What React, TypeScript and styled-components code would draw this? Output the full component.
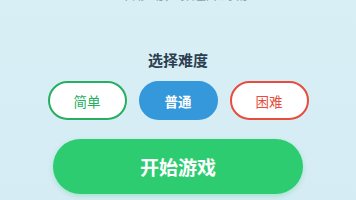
import React, { useState } from "react";
import styled, { createGlobalStyle } from "styled-components";

const Global = createGlobalStyle`
  html, body {
    margin: 0;
    padding: 0;
    background: #d8eef5;
    font-family: "Noto Sans CJK SC", "Noto Sans", sans-serif;
    overflow: hidden;
  }
`;

const Page = styled.div`
  width: 356px;
  height: 200px;
  display: flex;
  flex-direction: column;
  align-items: center;
  background: linear-gradient(180deg, #d9eff6 0%, #d5ecf4 100%);
`;

const Subtitle = styled.p`
  margin: -16px 0 0;
  font-size: 14px;
  line-height: 18px;
  color: #95a5a6;
`;

const Title = styled.h2`
  margin: 48px 0 0;
  font-size: 15px;
  line-height: 20px;
  font-weight: 700;
  color: #2c3e50;
`;

const Row = styled.div`
  display: flex;
  gap: 12px;
  margin-top: 11px;
`;

type Tone = "easy" | "normal" | "hard";

const toneColor: Record<Tone, string> = {
  easy: "#27ae60",
  normal: "#3498db",
  hard: "#e74c3c",
};

const LevelButton = styled.button<{ $tone: Tone; $active: boolean }>`
  width: 79px;
  height: 39px;
  box-sizing: border-box;
  border-radius: 20px;
  border: 2px solid ${(p) => toneColor[p.$tone]};
  background: ${(p) => (p.$active ? toneColor[p.$tone] : "#ffffff")};
  color: ${(p) => (p.$active ? "#ffffff" : toneColor[p.$tone])};
  font-family: inherit;
  font-size: 13.5px;
  font-weight: ${(p) => (p.$active ? 700 : 400)};
  padding: 0;
  cursor: pointer;
`;

const StartButton = styled.button`
  margin-top: 19px;
  width: 250px;
  height: 55px;
  border: none;
  border-radius: 28px;
  background: #2ecc71;
  color: #ffffff;
  font-family: inherit;
  font-size: 19px;
  font-weight: 700;
  box-shadow: 0 2px 5px rgba(46, 204, 113, 0.3);
  cursor: pointer;
`;

const levels: { key: Tone; label: string }[] = [
  { key: "easy", label: "简单" },
  { key: "normal", label: "普通" },
  { key: "hard", label: "困难" },
];

export default function App() {
  const [level, setLevel] = useState<Tone>("normal");
  return (
    <Page>
      <Global />
      <Subtitle>左右移动，躲避障碍物</Subtitle>
      <Title>选择难度</Title>
      <Row>
        {levels.map((l) => (
          <LevelButton
            key={l.key}
            $tone={l.key}
            $active={level === l.key}
            onClick={() => setLevel(l.key)}
          >
            {l.label}
          </LevelButton>
        ))}
      </Row>
      <StartButton>开始游戏</StartButton>
    </Page>
  );
}
